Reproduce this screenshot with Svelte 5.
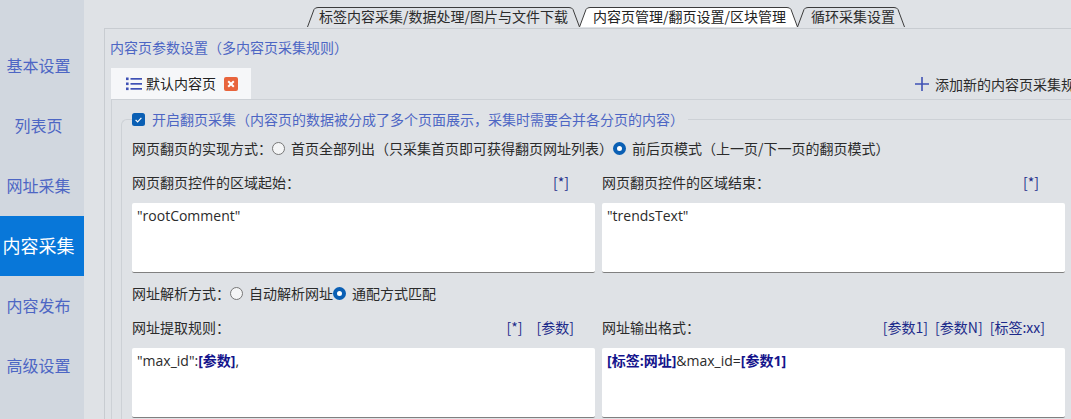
<script>
  const nav = [
    { label: '基本设置' },
    { label: '列表页' },
    { label: '网址采集' },
    { label: '内容采集', active: true },
    { label: '内容发布' },
    { label: '高级设置' }
  ];
  const tabs = [
    { label: '标签内容采集/数据处理/图片与文件下载', w: 273 },
    { label: '内容页管理/翻页设置/区块管理', w: 219, active: true },
    { label: '循环采集设置', w: 108 }
  ];
  const shape = (w) => `M0.5 21L7 3.5Q8 1.5 11 1.5L${w - 11} 1.5Q${w - 8} 1.5 ${w - 7} 3.5L${w - 0.5} 21`;
</script>

<div class="app">
  <nav class="side">
    {#each nav as item}
      <div class="nav-item" class:active={item.active}>{item.label}</div>
    {/each}
  </nav>
  <main class="main">
    <div class="tabs">
      {#each tabs as t}
        <div class="tab" class:on={t.active} style="width:{t.w}px">
          <svg width={t.w} height="21" viewBox="0 0 {t.w} 21">
            <path d={shape(t.w)} fill={t.active ? '#fff' : 'none'} stroke="#3c3c3c" stroke-width="1"/>
          </svg>
          <span>{t.label}</span>
        </div>
      {/each}
    </div>
    <section class="panel">
      <h2 class="title">内容页参数设置（多内容页采集规则）</h2>
      <div class="strip">
        <div class="ptab">
          <svg class="list" width="16" height="14" viewBox="0 0 16 14">
            <g fill="#3f51b5">
              <rect x="0" y="0.5" width="2.6" height="2.6"/><rect x="0" y="5.5" width="2.6" height="2.6"/><rect x="0" y="10.5" width="2.6" height="2.6"/>
              <rect x="4.5" y="1" width="11.5" height="1.7"/><rect x="4.5" y="6" width="11.5" height="1.7"/><rect x="4.5" y="11" width="11.5" height="1.7"/>
            </g>
          </svg>
          <span>默认内容页</span>
          <svg class="close" width="14" height="14" viewBox="0 0 14 14">
            <rect width="14" height="14" rx="2" fill="#e8643c"/>
            <path d="M4.2 4.2l5.6 5.6M9.8 4.2l-5.6 5.6" stroke="#fff" stroke-width="2"/>
          </svg>
        </div>
        <div class="add">
          <svg width="14" height="14" viewBox="0 0 14 14"><path d="M7 0v14M0 7h14" stroke="#3f51b5" stroke-width="1.6"/></svg>
          <span>添加新的内容页采集规则</span>
        </div>
      </div>
      <div class="inner">
        <div class="field">
          <div class="legend">
            <svg width="13" height="13" viewBox="0 0 13 13">
              <rect width="13" height="13" rx="2.5" fill="#0a5fb4"/>
              <path d="M3.6 6.8l2 2 3.8-4" fill="none" stroke="#fff" stroke-width="1.2"/>
            </svg>
            <span>开启翻页采集（内容页的数据被分成了多个页面展示，采集时需要合并各分页的内容）</span>
          </div>
          <div class="row r1">
            <span>网页翻页的实现方式：</span>
            <i class="radio"></i><span>首页全部列出（只采集首页即可获得翻页网址列表）</span>
            <i class="radio on"></i><span>前后页模式（上一页/下一页的翻页模式）</span>
          </div>
          <div class="cols c1">
            <div class="col">
              <div class="lab"><span>网页翻页控件的区域起始：</span><span class="links l1"><b>[*]</b></span></div>
              <div class="box">"rootComment"</div>
            </div>
            <div class="col">
              <div class="lab"><span>网页翻页控件的区域结束：</span><span class="links l1"><b>[*]</b></span></div>
              <div class="box">"trendsText"</div>
            </div>
          </div>
          <div class="row r2">
            <span>网址解析方式：</span>
            <i class="radio"></i><span>自动解析网址</span>
            <i class="radio on"></i><span>通配方式匹配</span>
          </div>
          <div class="cols c2">
            <div class="col">
              <div class="lab"><span>网址提取规则：</span><span class="links l2"><b>[*]</b><b>[参数]</b></span></div>
              <div class="box">"max_id":<strong>[参数]</strong>,</div>
            </div>
            <div class="col">
              <div class="lab"><span>网址输出格式：</span><span class="links l3"><b>[参数1]</b><b>[参数N]</b><b>[标签:xx]</b></span></div>
              <div class="box"><strong>[标签:网址]</strong>&amp;max_id=<strong>[参数1]</strong></div>
            </div>
          </div>
        </div>
      </div>
    </section>
  </main>
</div>

<style>
  :global(body) { margin: 0; background: #dfe2e6; }
  .app {
    width: 1071px; height: 419px; overflow: hidden; display: flex;
    font-family: "Noto Sans CJK SC", "Noto Sans", sans-serif;
    font-size: 14px; color: #2b2b2b; background: #dfe2e6;
  }
  .side {
    width: 84px; flex: none; padding-top: 36px; box-sizing: border-box;
    background: #d1d7df; display: flex; flex-direction: column;
  }
  .nav-item {
    height: 60px; display: flex; align-items: center; justify-content: center;
    font-size: 16px; line-height: 20px; padding: 0 7px 2px 0; box-sizing: border-box; color: #4d66c4;
  }
  .nav-item.active { background: #0877d9; color: #fff; font-size: 18px; }
  .main { flex: 1; min-width: 0; padding-left: 20px; }
  .tabs { height: 28px; box-sizing: border-box; padding: 6px 0 0 203px; display: flex; }
  .tab {
    position: relative; height: 21px; flex: none; margin-right: -1px; box-sizing: border-box;
    padding-left: 12px; line-height: 21px; font-size: 14px; color: #2b2b2b; white-space: nowrap;
  }
  .tab + .tab { padding-left: 14px; }
  .tab svg { position: absolute; left: 0; top: 0; }
  .tab span { position: relative; }
  .tab.on { color: #222; }
  .panel {
    border-top: 1px solid #c8ccd1; border-left: 1px solid #c8ccd1;
    padding: 8px 0 0 6px; height: 391px; box-sizing: border-box;
  }
  .title { margin: 0 0 0 -1px; font-size: 14px; font-weight: 400; line-height: 20px; color: #4d66c4; }
  .strip { display: flex; justify-content: space-between; margin-top: 11px; height: 31px; }
  .ptab {
    width: 140px; height: 31px; box-sizing: border-box; background: #f6f7f9;
    display: flex; align-items: center; padding-left: 15px; color: #222;
  }
  .ptab .list { margin-right: 4px; }
  .ptab .close { margin-left: 8px; }
  .ptab span { margin-top: -1px; }
  .add {
    display: flex; align-items: center; gap: 6px; white-space: nowrap;
    width: 156px; overflow: hidden; flex: none; color: #2b2b2b; font-size: 14px;
  }
  .add svg { flex: none; }
  .inner {
    border-top: 1px solid #cdd1d6; border-left: 1px solid #cdd1d6;
    padding: 19px 0 0 9px;
  }
  .field {
    position: relative; border-top: 1px solid #cdd1d6; border-left: 1px solid #cdd1d6;
    border-top-left-radius: 6px; padding: 0 0 0 10px; height: 301px;
  }
  .legend {
    position: absolute; left: 10px; top: -9px; display: flex; align-items: center; gap: 7px;
    color: #4d66c4; height: 16px; background: #dfe2e6; padding-right: 4px;
  }
  .legend span { margin-top: -1px; }
  .row { display: flex; align-items: center; height: 20px; white-space: nowrap; }
  .r1 { margin-top: 18px; }
  .r2 { margin-top: 10px; }
  .radio {
    width: 13px; height: 13px; box-sizing: border-box; border: 1px solid #777;
    border-radius: 50%; background: #f4f5f6; margin: 0 6px 0 0; flex: none;
  }
  .radio.on { border: 4px solid #0a5fb4; background: #fff; }
  .cols { display: grid; grid-template-columns: 463px 463px; column-gap: 7px; }
  .c1 { margin-top: 14px; }
  .c2 { margin-top: 14px; }
  .lab { display: flex; justify-content: space-between; height: 20px; line-height: 20px; margin-bottom: 11px; }
  .links { display: flex; color: #1c2a8a; }
  .links b { font-weight: 400; }
  .l1 { padding-right: 26px; }
  .l2 { gap: 14px; padding-right: 21px; }
  .l3 { gap: 7px; padding-right: 20px; }
  .box {
    height: 70px; box-sizing: border-box; background: #fff; border-radius: 2px;
    border-bottom: 1px solid #808080; padding: 3px 5px; font-size: 14px;
    font-family: "Open Sans", "Noto Sans CJK SC", sans-serif; color: #2b2b2b; line-height: 20px;
  }
  .box strong { color: #14148c; font-weight: 700; font-size: 14px; }
</style>
